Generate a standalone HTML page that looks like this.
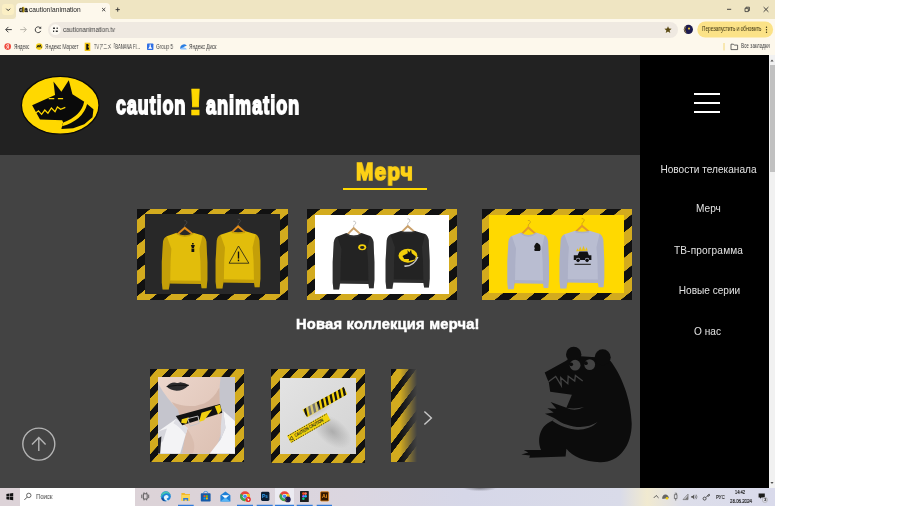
<!DOCTYPE html>
<html lang="ru">
<head>
<meta charset="utf-8">
<title>caution!animation</title>
<style>
html,body{margin:0;padding:0;background:#fff;}
body{width:900px;height:506px;position:relative;overflow:hidden;font-family:"Liberation Sans",sans-serif;}
.abs{position:absolute;}
#shot{position:absolute;left:0;top:0;width:775px;height:506px;overflow:hidden;background:#fdf8ec;}
/* browser chrome */
#tabstrip{left:0;top:0;width:775px;height:18.5px;background:#efe5c2;}
#tab{left:16px;top:3px;width:94px;height:16px;background:#fdf8ec;border-radius:4px 4px 0 0;}
#toolbar{left:0;top:18.5px;width:775px;height:21.5px;background:#fdf8ec;}
#omni{left:48px;top:22px;width:630px;height:15.5px;border-radius:8px;background:#efe9e1;}
#bookmarks{left:0;top:40px;width:775px;height:15px;background:#fdf8ec;}
.tiny{will-change:transform;position:absolute;white-space:nowrap;color:#333;line-height:1;transform-origin:0 0;}
.bm{font-size:6.3px;color:#444;top:43.6px;}
/* page */
#page{left:0;top:55px;width:769px;height:432.5px;background:#434343;overflow:hidden;}
#header{left:0;top:0;width:640px;height:100px;background:#222222;}
#side{left:640px;top:0;width:129px;height:433px;background:#000;}
#scroll{left:769px;top:55px;width:6px;height:432.5px;background:#f1f1f1;}
#thumb{left:769.5px;top:65px;width:5.5px;height:107px;background:#c1c1c1;}
.menu{will-change:transform;position:absolute;left:640px;width:137px;text-align:center;color:#e2e2e2;font-size:10.1px;line-height:12px;white-space:nowrap;}
.logo-t{will-change:transform;position:absolute;white-space:nowrap;color:#fff;font-weight:bold;font-size:25.5px;line-height:30px;letter-spacing:1.5px;transform-origin:0 0;transform:scaleX(.704);-webkit-text-stroke:1.9px #fff;}
#taskbar{left:0;top:487.5px;width:775px;height:18.5px;background:#dcdcea;}
.card{position:absolute;}
.big{background:repeating-linear-gradient(141deg,#111 0,#111 8.2px,#d3ab1e 8.6px,#d3ab1e 19px,#111 19.4px,#111 19.82px);}
.small{background:repeating-linear-gradient(132.6deg,#111 0,#111 5.3px,#d3ab1e 5.7px,#d3ab1e 13.9px,#111 14.3px,#111 14.56px);}
</style>
</head>
<body>
<div id="shot">

<!-- ===== browser chrome ===== -->
<div id="tabstrip" class="abs"></div>
<div id="tab" class="abs"></div>
<div id="toolbar" class="abs"></div>
<div id="omni" class="abs"></div>
<div id="bookmarks" class="abs"></div>
<!-- tab search -->
<div class="abs" style="left:2.4px;top:4px;width:11.6px;height:11.3px;border-radius:3px;background:#fbefc4;"></div>
<svg class="abs" style="left:0;top:0" width="775" height="55" viewBox="0 0 775 55">
  <path d="M6.3,8.7 L8.2,10.6 L10.1,8.7" fill="none" stroke="#333" stroke-width="1"/>
  <!-- tab bottom flares -->
  <path d="M12.5,18.7 Q16.3,18.7 16.3,15 V18.7 Z M113.8,18.7 Q110,18.7 110,15 V18.7 Z" fill="#fdf8ec"/>
  <rect x="21.9" y="7.2" width="2" height="5" fill="#2a2616"/>
  <!-- tab close / new tab -->
  <path d="M102.1,8 L105.3,11.2 M105.3,8 L102.1,11.2" stroke="#333" stroke-width=".9" fill="none"/>
  <path d="M115.6,9.6 H119.8 M117.7,7.5 V11.7" stroke="#333" stroke-width=".9" fill="none"/>
  <!-- window controls -->
  <path d="M727,9.3 H731.2" stroke="#333" stroke-width=".9" fill="none"/>
  <path d="M745,8.3 H748.3 V11.6 H745 Z M746,8.3 V7.2 H749.4 V10.6 H748.3" stroke="#333" stroke-width=".8" fill="none"/>
  <path d="M763.6,7.1 L768.4,11.8 M768.4,7.1 L763.6,11.8" stroke="#333" stroke-width=".9" fill="none"/>
  <!-- nav -->
  <path d="M11.8,29.6 H5.8 M8.4,26.9 L5.7,29.6 L8.4,32.3" stroke="#444" stroke-width="1" fill="none"/>
  <path d="M20.2,29.6 H26.2 M23.6,26.9 L26.3,29.6 L23.6,32.3" stroke="#b9b5aa" stroke-width="1" fill="none"/>
  <path d="M40.6,28.2 A2.9,2.9 0 1 0 40.8,30.9" stroke="#444" stroke-width="1" fill="none"/>
  <path d="M41.2,26.3 V28.7 H38.8 Z" fill="#444"/>
  <!-- site info -->
  <circle cx="55.4" cy="29.7" r="5.4" fill="#fdfaf3"/>
  <path d="M53,28.2 H55 M56.6,28.2 H57.8 M53,31.2 H54.2 M55.8,31.2 H57.8" stroke="#333" stroke-width="1.5" fill="none"/>
  <!-- star -->
  <path d="M668,26.2 L669,28.6 L671.6,28.8 L669.6,30.5 L670.3,33 L668,31.6 L665.7,33 L666.4,30.5 L664.4,28.8 L667,28.6 Z" fill="#5a4a12"/>
  <!-- avatar -->
  <circle cx="688.4" cy="29.4" r="4.6" fill="#1d1b4f"/>
  <path d="M686.6,25.6 A4.4,4.4 0 0 0 686.8,33.4 A6,6 0 0 1 686.6,25.6 Z" fill="#e9c43a"/>
  <circle cx="689" cy="28.6" r="1.1" fill="#e9c43a"/>
  <!-- update pill -->
  <rect x="697.3" y="21.5" width="75.8" height="16" rx="8" fill="#fbe287"/>
  <circle cx="766.5" cy="27.3" r=".7" fill="#3a3210"/><circle cx="766.5" cy="29.7" r=".7" fill="#3a3210"/><circle cx="766.5" cy="32.2" r=".7" fill="#3a3210"/>
  <!-- bookmark icons -->
  <circle cx="7.7" cy="46.6" r="3.3" fill="#f04a3c"/>
  <path d="M8.6,44.6 H7.6 Q6.4,44.8 6.6,46 Q6.8,46.9 7.8,46.9 L6.5,48.7 M8.4,44.6 V48.7" stroke="#fff" stroke-width=".7" fill="none"/>
  <circle cx="39.2" cy="46.6" r="3.3" fill="#f5d21c"/>
  <path d="M36.9,47.6 L38.2,45.2 L39,47.2 L40.2,44.8 L41.4,47.8" stroke="#111" stroke-width=".9" fill="none"/>
  <rect x="84.7" y="42.7" width="5.6" height="8.3" fill="#f2c511"/>
  <path d="M86.3,44 V49.8 H88 Q89.2,49.6 89,48.2 Q88.8,47 87.6,46.9 Q88.8,46.6 88.7,45.3 Q88.4,44 87.4,44 Z" fill="#111"/>
  <rect x="147" y="43.4" width="6.4" height="6.6" rx=".8" fill="#2f6fe4"/>
  <path d="M149.6,44.6 h1.2 v1.8 l1.4,2.4 h-4 l1.4,-2.4 z" fill="#fff"/>
  <path d="M180.4,49 Q179.6,45.6 183,44.4 Q186,43.6 186.8,46 Q185,45.6 184,47 Q183,48.8 180.4,49 Z" fill="#2a7de1"/>
  <path d="M180.4,49 Q182,47 184.4,47.4 Q186.6,47.8 186.8,49.6 H181 Z" fill="#8fc4ff"/>
  <!-- all bookmarks -->
  <path d="M724,43 V50.4" stroke="#f3d46a" stroke-width=".9" fill="none"/>
  <path d="M731,44.2 H733.4 L734.2,45.1 H737.6 V49.6 H731 Z" stroke="#444" stroke-width=".8" fill="none"/>
</svg>
<!-- favicon -->
<div class="tiny" style="left:18.7px;top:6.7px;font-size:6.6px;font-weight:bold;color:#111;-webkit-text-stroke:.35px #111;transform:scaleX(.9);letter-spacing:.1px;">c<span style="color:#e8bf0a;-webkit-text-stroke:.35px #e8bf0a;">!</span>a</div>
<div class="tiny" id="tabtitle" style="left:28.6px;top:6.9px;font-size:6.6px;color:#222;">caution!animation</div>
<div class="tiny" id="url" style="left:63.2px;top:26.8px;font-size:6.6px;color:#444;transform:scaleX(.915);">cautionanimation.tv</div>
<div class="tiny" id="pilltxt" style="left:702px;top:26.2px;font-size:6.3px;color:#3a3210;transform:scaleX(.765);">Перезапустить и обновить</div>
<div class="tiny bm" id="bm1" style="left:13.7px;transform:scaleX(.725);">Яндекс</div>
<div class="tiny bm" id="bm2" style="left:44.7px;transform:scaleX(.76);">Яндекс Маркет</div>
<div class="tiny bm" id="bm3" style="left:94.2px;transform:scaleX(.645);font-family:'Liberation Sans','Noto Sans CJK JP',sans-serif;">TVアニメ「BANANA FI...</div>
<div class="tiny bm" id="bm4" style="left:155.8px;transform:scaleX(.75);">Group 5</div>
<div class="tiny bm" id="bm5" style="left:189.2px;transform:scaleX(.752);">Яндекс Диск</div>
<div class="tiny bm" id="bm6" style="left:741px;top:43.2px;transform:scaleX(.735);">Все закладки</div>


<!-- ===== page ===== -->
<div id="page" class="abs">
  <div id="header" class="abs"></div>
    <svg class="abs" style="left:0;top:0;" width="130" height="100" viewBox="0 55 130 100">
    <ellipse cx="60.2" cy="105.3" rx="38.8" ry="28.9" fill="#ffd800" stroke="#0a0a0a" stroke-width="1.3"/>
    <g transform="translate(10,65) scale(0.15805)">
      <path d="M140,255 L285,190 L275,105 L325,170 L372,97 L395,185 L470,232 L528,280 L522,330 L470,375 L400,400 L325,405 L336,362 L330,350 L190,345 Z" fill="#0a0a0a"/>
      <path d="M470,228 Q455,320 337,364 L329,387 Q462,350 489,243 Z" fill="#ffd800"/>
      <path d="M165,302 L180,290 L200,312 L220,285 L240,305 L262,272 L285,295 L300,265 L320,280 L350,268" fill="none" stroke="#ffd800" stroke-width="8" stroke-linejoin="miter"/>
      <path d="M245,213 H280 M303,213 H336" stroke="#ffd800" stroke-width="8" fill="none"/>
    </g>
  </svg>

  <div class="logo-t" style="left:115.8px;top:35.2px;transform:scaleX(.695);">caution</div>
  <div class="logo-t" style="left:205.9px;top:35.2px;">animation</div>
  <div class="abs" id="excl" style="will-change:transform;left:187.2px;top:27.7px;color:#ffd800;font-weight:bold;font-size:36px;line-height:40px;transform-origin:0 0;transform:scaleX(1.42);-webkit-text-stroke:.6px #ffd800;">!</div>

  <!-- title -->
  <div class="abs" id="ttl" style="will-change:transform;left:356.3px;top:102.2px;color:#fdd116;font-weight:bold;font-size:24.6px;line-height:30px;letter-spacing:1.3px;white-space:nowrap;transform-origin:0 0;transform:scaleX(.85);-webkit-text-stroke:1.7px #fdd116;">Мерч</div>
  <div class="abs" style="left:343px;top:133px;width:83.5px;height:2.2px;background:#ffd800;"></div>

  <div class="card big" style="left:137.2px;top:153.6px;width:150.8px;height:91.4px;"><svg class="abs" style="left:8.1px;top:5.6px" width="134.8" height="79.8" viewBox="145.3 159.2 134.8 79.8"><rect x="145" y="159" width="136" height="81" fill="#282828"/><g transform="translate(162.1,177.0) scale(0.9957,1.0000)"><path d="M23,-5 q-0.3,-2 1,-2.6 q1.6,-0.8 1.2,-2.4 q-0.6,-1.6 -2.6,-1" fill="none" stroke="#555" stroke-width="0.6"/><path d="M15,2 L23,-5.4 L32,2 L30.4,3 L23,-2.6 L16.6,3 Z" fill="#e08a1a"/><path d="M15,0.9 Q23,6 31.6,0.9 L41,3.8 Q44,5.5 44.8,10 L45.8,30 L45.8,48 L45,56.5 L40,56.5 L39.3,52.3 L8,51.8 L7,57.8 L0.8,57.8 L0,51 L0,30 L1.2,10 Q2,5.8 5,4.4 Z" fill="#e2bd0b"/><path d="M1.2,10 Q2,5.8 5,4.4 L9.6,17 L8.8,30 L8.4,51.8 L7,57.8 L0.8,57.8 L0,51 L0,30 Z" fill="rgba(100,65,0,0.24)"/><path d="M44.8,10 Q44,5.5 41,3.8 L37.8,17 L38.8,30 L39.3,52.3 L40,56.5 L45,56.5 L45.8,48 L45.8,30 Z" fill="rgba(100,65,0,0.24)"/><path d="M15,0.9 Q23,6 31.6,0.9 L32.4,2 Q23,8.4 14.2,2 Z" fill="rgba(100,65,0,0.24)"/><path d="M8.4,48.6 L39.2,49 L39.3,52.3 L8,51.8 Z" fill="rgba(100,65,0,0.24)"/><path d="M30.4,11.2 h1.6 v1.4 h-1.6z M29.2,13.2 h4 l-1,3 h-2z M29.8,16.6 h2.8 v3.6 h-2.8z" fill="#111"/></g><g transform="translate(215.9,175.6) scale(0.9783,1.0069)"><path d="M23,-5 q-0.3,-2 1,-2.6 q1.6,-0.8 1.2,-2.4 q-0.6,-1.6 -2.6,-1" fill="none" stroke="#555" stroke-width="0.6"/><path d="M15,2 L23,-5.4 L32,2 L30.4,3 L23,-2.6 L16.6,3 Z" fill="#e08a1a"/><path d="M16,0.9 Q23,2.6 30.6,0.9 L41,3.8 Q44,5.5 44.8,10 L45.8,30 L45.8,48 L45,56.5 L40,56.5 L39.3,52.3 L8,51.8 L7,57.8 L0.8,57.8 L0,51 L0,30 L1.2,10 Q2,5.8 5,4.4 Z" fill="#e2bd0b"/><path d="M1.2,10 Q2,5.8 5,4.4 L9.6,17 L8.8,30 L8.4,51.8 L7,57.8 L0.8,57.8 L0,51 L0,30 Z" fill="rgba(100,65,0,0.24)"/><path d="M44.8,10 Q44,5.5 41,3.8 L37.8,17 L38.8,30 L39.3,52.3 L40,56.5 L45,56.5 L45.8,48 L45.8,30 Z" fill="rgba(100,65,0,0.24)"/><path d="M16,0.9 Q23,2.6 30.6,0.9 L30,2.6 Q23,4.2 16.6,2.6 Z" fill="rgba(100,65,0,0.24)"/><path d="M8.4,48.6 L39.2,49 L39.3,52.3 L8,51.8 Z" fill="rgba(100,65,0,0.24)"/><path d="M23.4,15.5 L13.8,32.6 L34,32.6 Z" fill="none" stroke="#1a1a1a" stroke-width="0.8"/><path d="M23.4,21 V28" stroke="#111" stroke-width="1.4"/><rect x="22.7" y="29" width="1.4" height="1.6" fill="#111"/></g></svg></div>
  <div class="card big" style="left:306.5px;top:153.6px;width:150.6px;height:91.4px;"><svg class="abs" style="left:8.1px;top:6px" width="134.5" height="79" viewBox="314.6 159.6 134.5 79"><rect x="314" y="159" width="136" height="81" fill="#fff"/><g transform="translate(332.3,176.8) scale(0.9109,0.9914)"><path d="M23,-5 q-0.3,-2 1,-2.6 q1.6,-0.8 1.2,-2.4 q-0.6,-1.6 -2.6,-1" fill="none" stroke="#999" stroke-width="0.6"/><path d="M15,2 L23,-5.4 L32,2 L30.4,3 L23,-2.6 L16.6,3 Z" fill="#c9a06a"/><path d="M15,0.9 Q23,6 31.6,0.9 L41,3.8 Q44,5.5 44.8,10 L45.8,30 L45.8,48 L45,56.5 L40,56.5 L39.3,52.3 L8,51.8 L7,57.8 L0.8,57.8 L0,51 L0,30 L1.2,10 Q2,5.8 5,4.4 Z" fill="#232323"/><path d="M1.2,10 Q2,5.8 5,4.4 L9.6,17 L8.8,30 L8.4,51.8 L7,57.8 L0.8,57.8 L0,51 L0,30 Z" fill="rgba(70,70,70,0.35)"/><path d="M44.8,10 Q44,5.5 41,3.8 L37.8,17 L38.8,30 L39.3,52.3 L40,56.5 L45,56.5 L45.8,48 L45.8,30 Z" fill="rgba(70,70,70,0.35)"/><path d="M15,0.9 Q23,6 31.6,0.9 L32.4,2 Q23,8.4 14.2,2 Z" fill="rgba(70,70,70,0.35)"/><path d="M8.4,48.6 L39.2,49 L39.3,52.3 L8,51.8 Z" fill="rgba(70,70,70,0.35)"/><ellipse cx="32.4" cy="15.2" rx="4.4" ry="3" fill="#f2cf0a"/><ellipse cx="32.4" cy="15.4" rx="2.4" ry="1.5" fill="#222"/></g><g transform="translate(385.2,174.7) scale(0.9630,1.0138)"><path d="M23,-5 q-0.3,-2 1,-2.6 q1.6,-0.8 1.2,-2.4 q-0.6,-1.6 -2.6,-1" fill="none" stroke="#999" stroke-width="0.6"/><path d="M15,2 L23,-5.4 L32,2 L30.4,3 L23,-2.6 L16.6,3 Z" fill="#c9a06a"/><path d="M16,0.9 Q23,2.6 30.6,0.9 L41,3.8 Q44,5.5 44.8,10 L45.8,30 L45.8,48 L45,56.5 L40,56.5 L39.3,52.3 L8,51.8 L7,57.8 L0.8,57.8 L0,51 L0,30 L1.2,10 Q2,5.8 5,4.4 Z" fill="#232323"/><path d="M1.2,10 Q2,5.8 5,4.4 L9.6,17 L8.8,30 L8.4,51.8 L7,57.8 L0.8,57.8 L0,51 L0,30 Z" fill="rgba(70,70,70,0.35)"/><path d="M44.8,10 Q44,5.5 41,3.8 L37.8,17 L38.8,30 L39.3,52.3 L40,56.5 L45,56.5 L45.8,48 L45.8,30 Z" fill="rgba(70,70,70,0.35)"/><path d="M16,0.9 Q23,2.6 30.6,0.9 L30,2.6 Q23,4.2 16.6,2.6 Z" fill="rgba(70,70,70,0.35)"/><path d="M8.4,48.6 L39.2,49 L39.3,52.3 L8,51.8 Z" fill="rgba(70,70,70,0.35)"/><ellipse cx="23.2" cy="25.2" rx="9.8" ry="6.9" fill="#f2cf0a"/><path d="M17.5,25.5 L23,22.8 L22.8,19.6 L24.6,22 L26.4,19.4 L27.2,22.8 L31.4,26 L30.4,29 L24,30.5 L24.4,28.6 L19.4,28.4 Z" fill="#151515"/><path d="M19.5,35.5 Q29,36 33.5,26.5" fill="none" stroke="#c9c9c9" stroke-width="1.5"/></g></svg></div>
  <div class="card big" style="left:481.7px;top:153.6px;width:150.3px;height:91.4px;"><svg class="abs" style="left:7.4px;top:6.2px" width="135.3" height="78.4" viewBox="489 159.8 135.3 78.4"><rect x="488" y="159" width="137" height="81" fill="#ffd900"/><g transform="translate(507.3,176.3) scale(0.9109,0.9983)"><path d="M23,-5 q-0.3,-2 1,-2.6 q1.6,-0.8 1.2,-2.4 q-0.6,-1.6 -2.6,-1" fill="none" stroke="#b58a1a" stroke-width="0.6"/><path d="M15,2 L23,-5.4 L32,2 L30.4,3 L23,-2.6 L16.6,3 Z" fill="#e39a2a"/><path d="M15,0.9 Q23,6 31.6,0.9 L41,3.8 Q44,5.5 44.8,10 L45.8,30 L45.8,48 L45,56.5 L40,56.5 L39.3,52.3 L8,51.8 L7,57.8 L0.8,57.8 L0,51 L0,30 L1.2,10 Q2,5.8 5,4.4 Z" fill="#b9bdd1"/><path d="M1.2,10 Q2,5.8 5,4.4 L9.6,17 L8.8,30 L8.4,51.8 L7,57.8 L0.8,57.8 L0,51 L0,30 Z" fill="rgba(120,125,160,0.2)"/><path d="M44.8,10 Q44,5.5 41,3.8 L37.8,17 L38.8,30 L39.3,52.3 L40,56.5 L45,56.5 L45.8,48 L45.8,30 Z" fill="rgba(120,125,160,0.2)"/><path d="M15,0.9 Q23,6 31.6,0.9 L32.4,2 Q23,8.4 14.2,2 Z" fill="rgba(120,125,160,0.2)"/><path d="M8.4,48.6 L39.2,49 L39.3,52.3 L8,51.8 Z" fill="rgba(120,125,160,0.2)"/><path transform="translate(2.6,0)" d="M28.6,12 q1.4,-1.6 2.8,0 q2.6,1 2.4,4.4 q0.6,2.4 -0.8,3.2 h-5.6 q-1,-1.6 0.4,-3 q-1.4,-0.6 -0.8,-2 z" fill="#111"/></g><g transform="translate(559.5,174.7) scale(0.9783,1.0138)"><path d="M23,-5 q-0.3,-2 1,-2.6 q1.6,-0.8 1.2,-2.4 q-0.6,-1.6 -2.6,-1" fill="none" stroke="#b58a1a" stroke-width="0.6"/><path d="M15,2 L23,-5.4 L32,2 L30.4,3 L23,-2.6 L16.6,3 Z" fill="#e39a2a"/><path d="M16,0.9 Q23,2.6 30.6,0.9 L41,3.8 Q44,5.5 44.8,10 L45.8,30 L45.8,48 L45,56.5 L40,56.5 L39.3,52.3 L8,51.8 L7,57.8 L0.8,57.8 L0,51 L0,30 L1.2,10 Q2,5.8 5,4.4 Z" fill="#b9bdd1"/><path d="M1.2,10 Q2,5.8 5,4.4 L9.6,17 L8.8,30 L8.4,51.8 L7,57.8 L0.8,57.8 L0,51 L0,30 Z" fill="rgba(120,125,160,0.2)"/><path d="M44.8,10 Q44,5.5 41,3.8 L37.8,17 L38.8,30 L39.3,52.3 L40,56.5 L45,56.5 L45.8,48 L45.8,30 Z" fill="rgba(120,125,160,0.2)"/><path d="M16,0.9 Q23,2.6 30.6,0.9 L30,2.6 Q23,4.2 16.6,2.6 Z" fill="rgba(120,125,160,0.2)"/><path d="M8.4,48.6 L39.2,49 L39.3,52.3 L8,51.8 Z" fill="rgba(120,125,160,0.2)"/><g transform="translate(0,2)"><path d="M14.6,27.6 v-4.6 h4 l1.6,-3.6 h8.4 l1.4,3.6 h2.6 v4.6 h-2.2 a2.2,2.2 0 0 0 -4.4,0 h-4.8 a2.2,2.2 0 0 0 -4.4,0z" fill="#111"/><circle cx="19" cy="28" r="1.8" fill="#111"/><circle cx="28.2" cy="28" r="1.8" fill="#111"/><path d="M17,19 l1.4,-3 l1.2,2.4 l1.6,-4 l1.6,3.6 l1.8,-4.4 l1.6,4.4 l1.6,-3 l1,3.6 z" fill="#e8c21a"/><rect x="15.4" y="31.4" width="16.6" height="1.2" fill="#333"/></g></g></svg></div>


  <div class="abs" id="sub" style="will-change:transform;left:295.5px;top:261.1px;color:#fff;font-weight:bold;font-size:14px;letter-spacing:.2px;line-height:16px;white-space:nowrap;transform-origin:0 0;transform:scaleX(1.05);-webkit-text-stroke:.5px #fff;">Новая коллекция мерча!</div>

    <div class="card small" style="left:150.1px;top:313.6px;width:93.9px;height:93.8px;">
    <svg class="abs" style="left:8.3px;top:8.8px" width="76.9" height="76.5" viewBox="15 15 475 472" preserveAspectRatio="none">
      <defs><linearGradient id="skin" x1="0" y1="0" x2="1" y2="1"><stop offset="0" stop-color="#ecd6cc"/><stop offset="1" stop-color="#dcc0b2"/></linearGradient></defs>
      <rect x="0" y="0" width="506" height="506" fill="#c5c5cd"/>
      <path d="M15,15 H402 L396,70 Q392,130 396,182 L408,238 L424,300 L365,487 H165 L192,330 L165,310 L138,215 Q70,150 15,55 Z" fill="url(#skin)"/>
      <path d="M138,215 Q110,190 100,170 Q200,215 300,178 Q360,150 394,80 L396,182 L150,262 Z" fill="#c9a798" opacity=".55"/>
      <path d="M190,330 Q260,420 230,487 H165 Z" fill="#d3b5a6" opacity=".6"/>
      <path d="M68,74 Q95,44 125,50 Q140,56 152,48 Q185,50 206,66 Q170,100 130,100 Q92,98 68,74 Z" fill="#2c2c2e"/>
      <path d="M68,74 Q135,62 206,66" stroke="#0e0e0e" stroke-width="5" fill="none"/>
      <path d="M15,352 L126,274 L198,330 L152,487 H15 Z" fill="#f3f3f5"/>
      <path d="M15,352 L70,332 L46,410 L15,440 Z" fill="#d6d6dc"/>
      <path d="M126,274 L198,330 L186,372 Q150,320 110,300 Z" fill="#dedee4"/>
      <path d="M418,224 L490,286 V487 H335 L402,400 L432,330 Z" fill="#f5f5f7"/>
      <path d="M418,224 L432,330 L402,400 Q400,320 410,240 Z" fill="#dcdce2"/>
      <path d="M15,395 L36,380 L28,487 H15 Z" fill="#222226"/>
      <path d="M125,255 L398,182 L412,236 L165,312 Z" fill="#121212"/>
      <path d="M162,276 L206,264 L190,304 L158,298 Z M284,236 L350,216 L300,282 L268,292 Z M366,196 L398,186 L407,224 L386,246 Z" fill="#f0cf10"/>
      <path d="M198,272 L262,256 L270,300 L214,318 Z" fill="none" stroke="#c4c4c8" stroke-width="6"/>
    </svg>
  </div>
  <div class="card small" style="left:270.9px;top:313.7px;width:94.1px;height:93.9px;">
    <svg class="abs" style="left:8.8px;top:9.4px" width="76.7" height="75.9" viewBox="17 20 473 467" preserveAspectRatio="none">
      <defs>
        <radialGradient id="shd" cx="0.5" cy="0.5" r="0.5"><stop offset="0" stop-color="#8a8a8a" stop-opacity=".55"/><stop offset="1" stop-color="#8a8a8a" stop-opacity="0"/></radialGradient>
        <linearGradient id="bgp" x1="0" y1="0" x2="1" y2="1"><stop offset="0" stop-color="#e4e4e4"/><stop offset="1" stop-color="#d2d2d2"/></linearGradient>
        <clipPath id="tp1"><path d="M155,215 L410,75 L432,120 L185,262 Z"/></clipPath>
      </defs>
      <rect x="0" y="0" width="506" height="506" fill="url(#bgp)"/>
      <ellipse cx="340" cy="350" rx="135" ry="80" transform="rotate(38 340 350)" fill="url(#shd)"/>
      <ellipse cx="255" cy="210" rx="110" ry="40" transform="rotate(-29 255 210)" fill="url(#shd)" opacity=".6"/>
      <path d="M155,215 L410,75 L432,120 L185,262 Z" fill="#f2d10c"/>
      <g clip-path="url(#tp1)" fill="#151515"><path d="M164,210 L177,203 L188,256 L175,263Z M190,196 L203,189 L214,242 L201,249Z M216,181 L230,174 L241,227 L227,235Z M243,167 L256,160 L267,213 L254,220Z M269,152 L282,145 L293,198 L280,206Z M295,138 L308,131 L319,184 L306,191Z M322,124 L335,116 L346,170 L333,177Z M348,109 L361,102 L372,155 L359,162Z M374,95 L387,87 L398,141 L385,148Z M400,80 L414,73 L425,126 L411,134Z"/></g>
      <path d="M178,202 l62,-34 l24,48 l-62,34z" fill="#c2c2c2" opacity=".55"/>
      <path d="M60,375 L305,235 L328,280 L85,420 Z" fill="#f1d20e"/>
      <path d="M66,376 L306,240" stroke="#222" stroke-width="5" stroke-dasharray="9 7" fill="none"/>
      <path d="M88,415 L326,278" stroke="#222" stroke-width="5" stroke-dasharray="9 7" fill="none"/>
      <text transform="translate(112,384) rotate(-29.7)" font-family="Liberation Sans, sans-serif" font-weight="bold" font-size="30" fill="#1c1c1c" textLength="200" lengthAdjust="spacingAndGlyphs">CAUTION CAUTION</text>
      <path d="M88,378 l12,20 l-24,3z" fill="none" stroke="#222" stroke-width="4"/>
    </svg>
  </div>
  <div class="card" style="left:391px;top:313.7px;width:27px;height:93.8px;background:repeating-linear-gradient(127.3deg,#111 0,#111 4.4px,#d3ab1e 4.8px,#d3ab1e 14px,#111 14.4px,#111 15.58px);-webkit-mask-image:linear-gradient(90deg,#000 0,#000 9px,transparent 26px);mask-image:linear-gradient(90deg,#000 0,#000 9px,transparent 26px);"></div>
  <svg class="abs" style="left:420px;top:352px" width="16" height="22" viewBox="420 407 16 22"><path d="M424.4,411.4 L431.4,418 L424.4,424.6" fill="none" stroke="#c9c9c9" stroke-width="1.4"/></svg>

    <svg class="abs" style="left:515px;top:285px" width="130" height="130" viewBox="515 340 130 130"><g fill="#0c0c0c"><path d="M544.7,372.5 L566.1,360.7 L567.5,359.4 L580.6,356.3 L595.8,357.3 L610.3,360.7 C620.7,373.7 631.2,398.6 631.7,423.5 C631.7,445.7 619.3,462.8 599.9,462.3 C584.7,461.7 572.3,456.7 566.4,448.8 L565.6,456.4 L529.2,457.7 L530.0,455.6 L521.3,454.5 L528.4,452.5 L523.7,450.1 L541.1,450.1 C537.1,440.6 538.7,426.4 552.2,420.8 L554.5,418.2 L545.0,413.7 L553.7,412.5 L547.4,408.2 L556.4,408.7 L550.6,401.9 L566.4,407.7 L571.9,394.7 L550.2,391.8 L548.8,382.2 L547.7,380.1 Z"/><circle cx="573.7" cy="354.5" r="7.7"/><circle cx="602.7" cy="357.3" r="8"/></g><circle cx="575.1" cy="365.2" r="5.4" fill="#434343"/><circle cx="589.7" cy="364.6" r="5.4" fill="#434343"/><circle cx="571.2" cy="364.3" r="1.9" fill="#0c0c0c"/><circle cx="585.9" cy="363.2" r="1.9" fill="#0c0c0c"/><path d="M548.5,381.8 L555.7,376.5 L561.3,385.6 L560.7,377.6 L567.8,383.7 L568.2,376.2 L574.7,381.1 L575.4,375.5 L582.7,380.9" fill="none" stroke="#434343" stroke-width="1.3" stroke-linejoin="miter" stroke-miterlimit="6"/><path d="M566.4,407.7 Q575.1,412.1 584.0,407.1 Q575.1,409.6 566.4,407.7 Z" fill="#434343"/><path d="M552.2,420.8 C567.2,431.4 586.2,433.5 597.6,422.1 C586.2,429.5 568.8,428.7 554.5,418.2 Z" fill="#434343"/></svg>

    <svg class="abs" style="left:18px;top:368px" width="42" height="42" viewBox="18 423 42 42"><circle cx="38.8" cy="444.1" r="16" fill="none" stroke="#b4b4b4" stroke-width="1.4"/><path d="M38.8,451 V437.6 M32,444.5 L38.8,437.5 L45.6,444.5" fill="none" stroke="#b4b4b4" stroke-width="1.4"/></svg>


  <div id="side" class="abs"></div>
  <!-- hamburger -->
  <div class="abs" style="left:693.7px;top:37.7px;width:26.7px;height:2.8px;background:#fff;"></div>
  <div class="abs" style="left:693.7px;top:46.6px;width:26.7px;height:2.8px;background:#fff;"></div>
  <div class="abs" style="left:693.7px;top:55.5px;width:26.7px;height:2.8px;background:#fff;"></div>
  <div class="menu" style="top:108.8px;">Новости телеканала</div>
  <div class="menu" style="top:147.7px;">Мерч</div>
  <div class="menu" style="top:189.5px;letter-spacing:.15px;">ТВ-программа</div>
  <div class="menu" style="top:229.5px;left:640.6px;">Новые серии</div>
  <div class="menu" style="top:271px;left:638.9px;">О нас</div>
</div>
<div id="scroll" class="abs"></div>
<div id="thumb" class="abs"></div>
<svg class="abs" style="left:769px;top:55px" width="6" height="433" viewBox="0 0 6 433"><path d="M1.4,6.6 L3,4.6 L4.6,6.6 Z M1.4,427 L3,429 L4.6,427 Z" fill="#505050"/></svg>

<!-- ===== taskbar ===== -->
<div id="taskbar" class="abs"></div>
<div class="abs" style="left:0;top:487.6px;width:775px;height:18.4px;background:radial-gradient(ellipse 17px 3.2px at 480px 0,rgba(85,85,92,.65),rgba(85,85,92,0) 100%),linear-gradient(90deg,#ddd3d8 0,#dcd3d8 25%,#dbd6e0 45%,#d6d7e8 60%,#d9dbe9 80%,#f1ead0 83.5%,#dddeea 88%,#d9daeb 100%);"></div>
<div class="abs" style="left:20px;top:487.6px;width:115.3px;height:18px;background:#fff;"></div>
<div class="abs" style="left:275px;top:487.6px;width:19px;height:18.4px;background:#ecebf2;"></div>
<svg class="abs" style="left:0;top:484px" width="775" height="22" viewBox="0 484 775 22">
  <!-- start -->
  <path d="M6.4,494 L9.3,493.6 V496.4 H6.4 Z M9.8,493.5 L13.2,493 V496.4 H9.8 Z M6.4,496.9 H9.3 V499.7 L6.4,499.3 Z M9.8,496.9 H13.2 V500.3 L9.8,499.8 Z" fill="#111"/>
  <!-- search icon -->
  <circle cx="28.8" cy="495.4" r="2.2" fill="none" stroke="#444" stroke-width=".8"/><path d="M27.2,497.1 L24.4,499.9" stroke="#444" stroke-width=".9"/>
  <!-- task view -->
  <path d="M143.4,493.8 H147.2 V499 H143.4 Z M141.8,494.6 V498.2 M148.7,494.6 V498.2 M143.4,493 H144.6 M146,493 H147.2 M143.4,499.8 H144.6 M146,499.8 H147.2" fill="none" stroke="#444" stroke-width=".8"/>
  <!-- edge -->
  <circle cx="165.8" cy="496.3" r="5" fill="#1f86d8"/>
  <path d="M161,497.6 A5,5 0 0 1 170.7,495.2 Q168.6,492.6 165.2,493.4 Q162,494.4 161,497.6 Z" fill="#46c7b0"/>
  <path d="M163.8,497.4 Q164,494.8 166.6,494.9 Q168.8,495.2 168.6,497 Q168.2,498.4 166.8,498.2 Q166.2,499.8 168.4,500.4 Q165,501.6 163.8,497.4 Z" fill="#e9f4fb"/>
  <path d="M161.2,498.4 Q162.6,502 166.8,501.2 Q163.4,500.6 163.2,497.2 Z" fill="#12509c"/>
  <!-- explorer -->
  <path d="M181.4,493 H184.6 L185.4,494 H190 V500.8 H181.4 Z" fill="#f2b82a"/>
  <path d="M181.4,495 H190 V500.8 H181.4 Z" fill="#fbd65a"/>
  <path d="M183.2,498 H188.2 V500.8 H186.8 V499.4 H184.6 V500.8 H183.2 Z" fill="#2f7ad9"/>
  <!-- store -->
  <path d="M203.4,493.4 Q203.4,491.4 205.7,491.4 Q208,491.4 208,493.4" fill="none" stroke="#3f8be0" stroke-width=".8"/>
  <rect x="200.8" y="493.2" width="9.8" height="8.4" rx=".8" fill="#165aa8"/>
  <rect x="203.6" y="495.2" width="1.9" height="1.9" fill="#f25022"/><rect x="205.9" y="495.2" width="1.9" height="1.9" fill="#7fba00"/><rect x="203.6" y="497.5" width="1.9" height="1.9" fill="#00a4ef"/><rect x="205.9" y="497.5" width="1.9" height="1.9" fill="#ffb900"/>
  <!-- mail -->
  <path d="M220.4,495.2 L225.4,491.6 L230.4,495.2 V501.4 H220.4 Z" fill="#1d7fd6"/>
  <path d="M221.6,495.2 H229.2 L225.4,498.4 Z" fill="#fff"/>
  <path d="M220.4,501.4 L225.4,497.6 L230.4,501.4 Z" fill="#56b4f5"/>
  <!-- chrome 1 -->
  <g id="chr">
    <circle cx="245" cy="496.3" r="5" fill="#e8453c"/>
    <path d="M245,496.3 L240.7,493.8 A5,5 0 0 0 245,501.3 L247.2,497.5 Z" fill="#35a853"/>
    <path d="M245,496.3 L247.2,497.5 L245,501.3 A5,5 0 0 0 249.4,493.9 L245,493.9 Z" fill="#fbc116"/>
    <circle cx="245" cy="496.3" r="2.3" fill="#fff"/><circle cx="245" cy="496.3" r="1.8" fill="#4a8af4"/>
  </g>
  <circle cx="248.2" cy="499.4" r="2.6" fill="#e23131"/><path d="M247.4,498 L249.6,499.6 L248,501 Z" fill="#fff"/>
  <!-- ps -->
  <rect x="261" y="491.8" width="8.4" height="9.2" rx="1.4" fill="#0a1e33"/>
  <!-- chrome 2 -->
  <use href="#chr" x="39.5" y="0"/>
  <circle cx="287.8" cy="499.4" r="2.9" fill="#1d1b4f"/><path d="M286.4,497.6 A2.6,2.6 0 0 0 286.6,501.4 A3.6,3.6 0 0 1 286.4,497.6 Z" fill="#e9c43a"/>
  <!-- figma -->
  <rect x="300" y="491" width="8.8" height="11" rx=".6" fill="#1e1e1e"/>
  <circle cx="303.4" cy="493.6" r="1.3" fill="#f24e1e"/><circle cx="305.6" cy="493.6" r="1.3" fill="#ff7262"/><circle cx="303.4" cy="496.2" r="1.3" fill="#a259ff"/><circle cx="305.6" cy="496.2" r="1.3" fill="#1abcfe"/><circle cx="303.4" cy="498.8" r="1.3" fill="#0acf83"/>
  <!-- ai -->
  <rect x="320.6" y="491.8" width="8" height="9.2" rx=".6" fill="#2e1600" stroke="#d9811e" stroke-width=".9"/>
  <!-- running underlines -->
  <path d="M178,505.4 H193.7 M237,505.4 H253 M256.7,505.4 H272.7 M275,505.4 H294 M296.7,505.4 H312.7 M316.7,505.4 H332" stroke="#2f7ad9" stroke-width="1.3"/>
  <!-- tray -->
  <path d="M653.8,497.9 L656.2,495.5 L658.6,497.9" fill="none" stroke="#333" stroke-width=".8"/>
  <path d="M662.4,499 A3.3,3.3 0 1 1 668.8,498 Z" fill="#666"/><circle cx="667" cy="498.3" r="1.3" fill="#f2cf10"/>
  <path d="M674.4,494.6 H677 V498.6 H674.4 Z M675.7,498.6 V500.6 M674.8,493.2 H676.6 V494.6" fill="none" stroke="#555" stroke-width=".7"/>
  <path d="M683,499.6 L688,494.2 V499.6 Z" fill="none" stroke="#666" stroke-width=".7"/><path d="M684.6,499.6 L688,496 V499.6 Z" fill="#777"/>
  <path d="M691.3,496 H692.6 L694.2,494.4 V499.4 L692.6,497.8 H691.3 Z" fill="#555"/><path d="M695.2,495.4 Q696.2,496.9 695.2,498.4 M696.2,494.6 Q697.8,496.9 696.2,499.2" fill="none" stroke="#555" stroke-width=".6"/>
  <path d="M706.2,497.4 L708.4,494.6 Q709.4,493.6 709.6,495 Q709.4,496.4 707.6,496.2" fill="none" stroke="#444" stroke-width=".9"/><circle cx="704.6" cy="498.6" r="1.5" fill="none" stroke="#444" stroke-width=".9"/>
  <path d="M758.6,493.4 H764.8 V497.6 H761.4 L760,498.8 V497.6 H758.6 Z" fill="#1c1c1c"/>
  <circle cx="764.9" cy="499.9" r="2.6" fill="#dddde8" stroke="#999" stroke-width=".5"/>
</svg>
<div class="tiny" style="left:35.7px;top:493.3px;font-size:7.2px;color:#444;transform:scaleX(.82);">Поиск</div>
<div class="tiny" style="left:262.3px;top:494px;font-size:5.2px;font-weight:bold;color:#31a8ff;transform:scaleX(.9);">Ps</div>
<div class="tiny" style="left:322.3px;top:494.2px;font-size:5.2px;font-weight:bold;color:#f79a1e;">Ai</div>
<div class="tiny" id="rus" style="left:715.8px;top:493.6px;font-size:6px;color:#222;-webkit-text-stroke:.15px #222;transform:scaleX(.72);">РУС</div>
<div class="tiny" id="tm" style="left:735.3px;top:489.2px;font-size:6.1px;color:#1c1c1c;-webkit-text-stroke:.2px #1c1c1c;transform:scaleX(.66);">14:42</div>
<div class="tiny" id="dt" style="left:729.5px;top:497.6px;font-size:6.1px;color:#1c1c1c;-webkit-text-stroke:.2px #1c1c1c;transform:scaleX(.72);">28.06.2024</div>
<div class="tiny" style="left:763.7px;top:497.7px;font-size:4.4px;color:#111;font-weight:bold;">3</div>


</div>
</body>
</html>
